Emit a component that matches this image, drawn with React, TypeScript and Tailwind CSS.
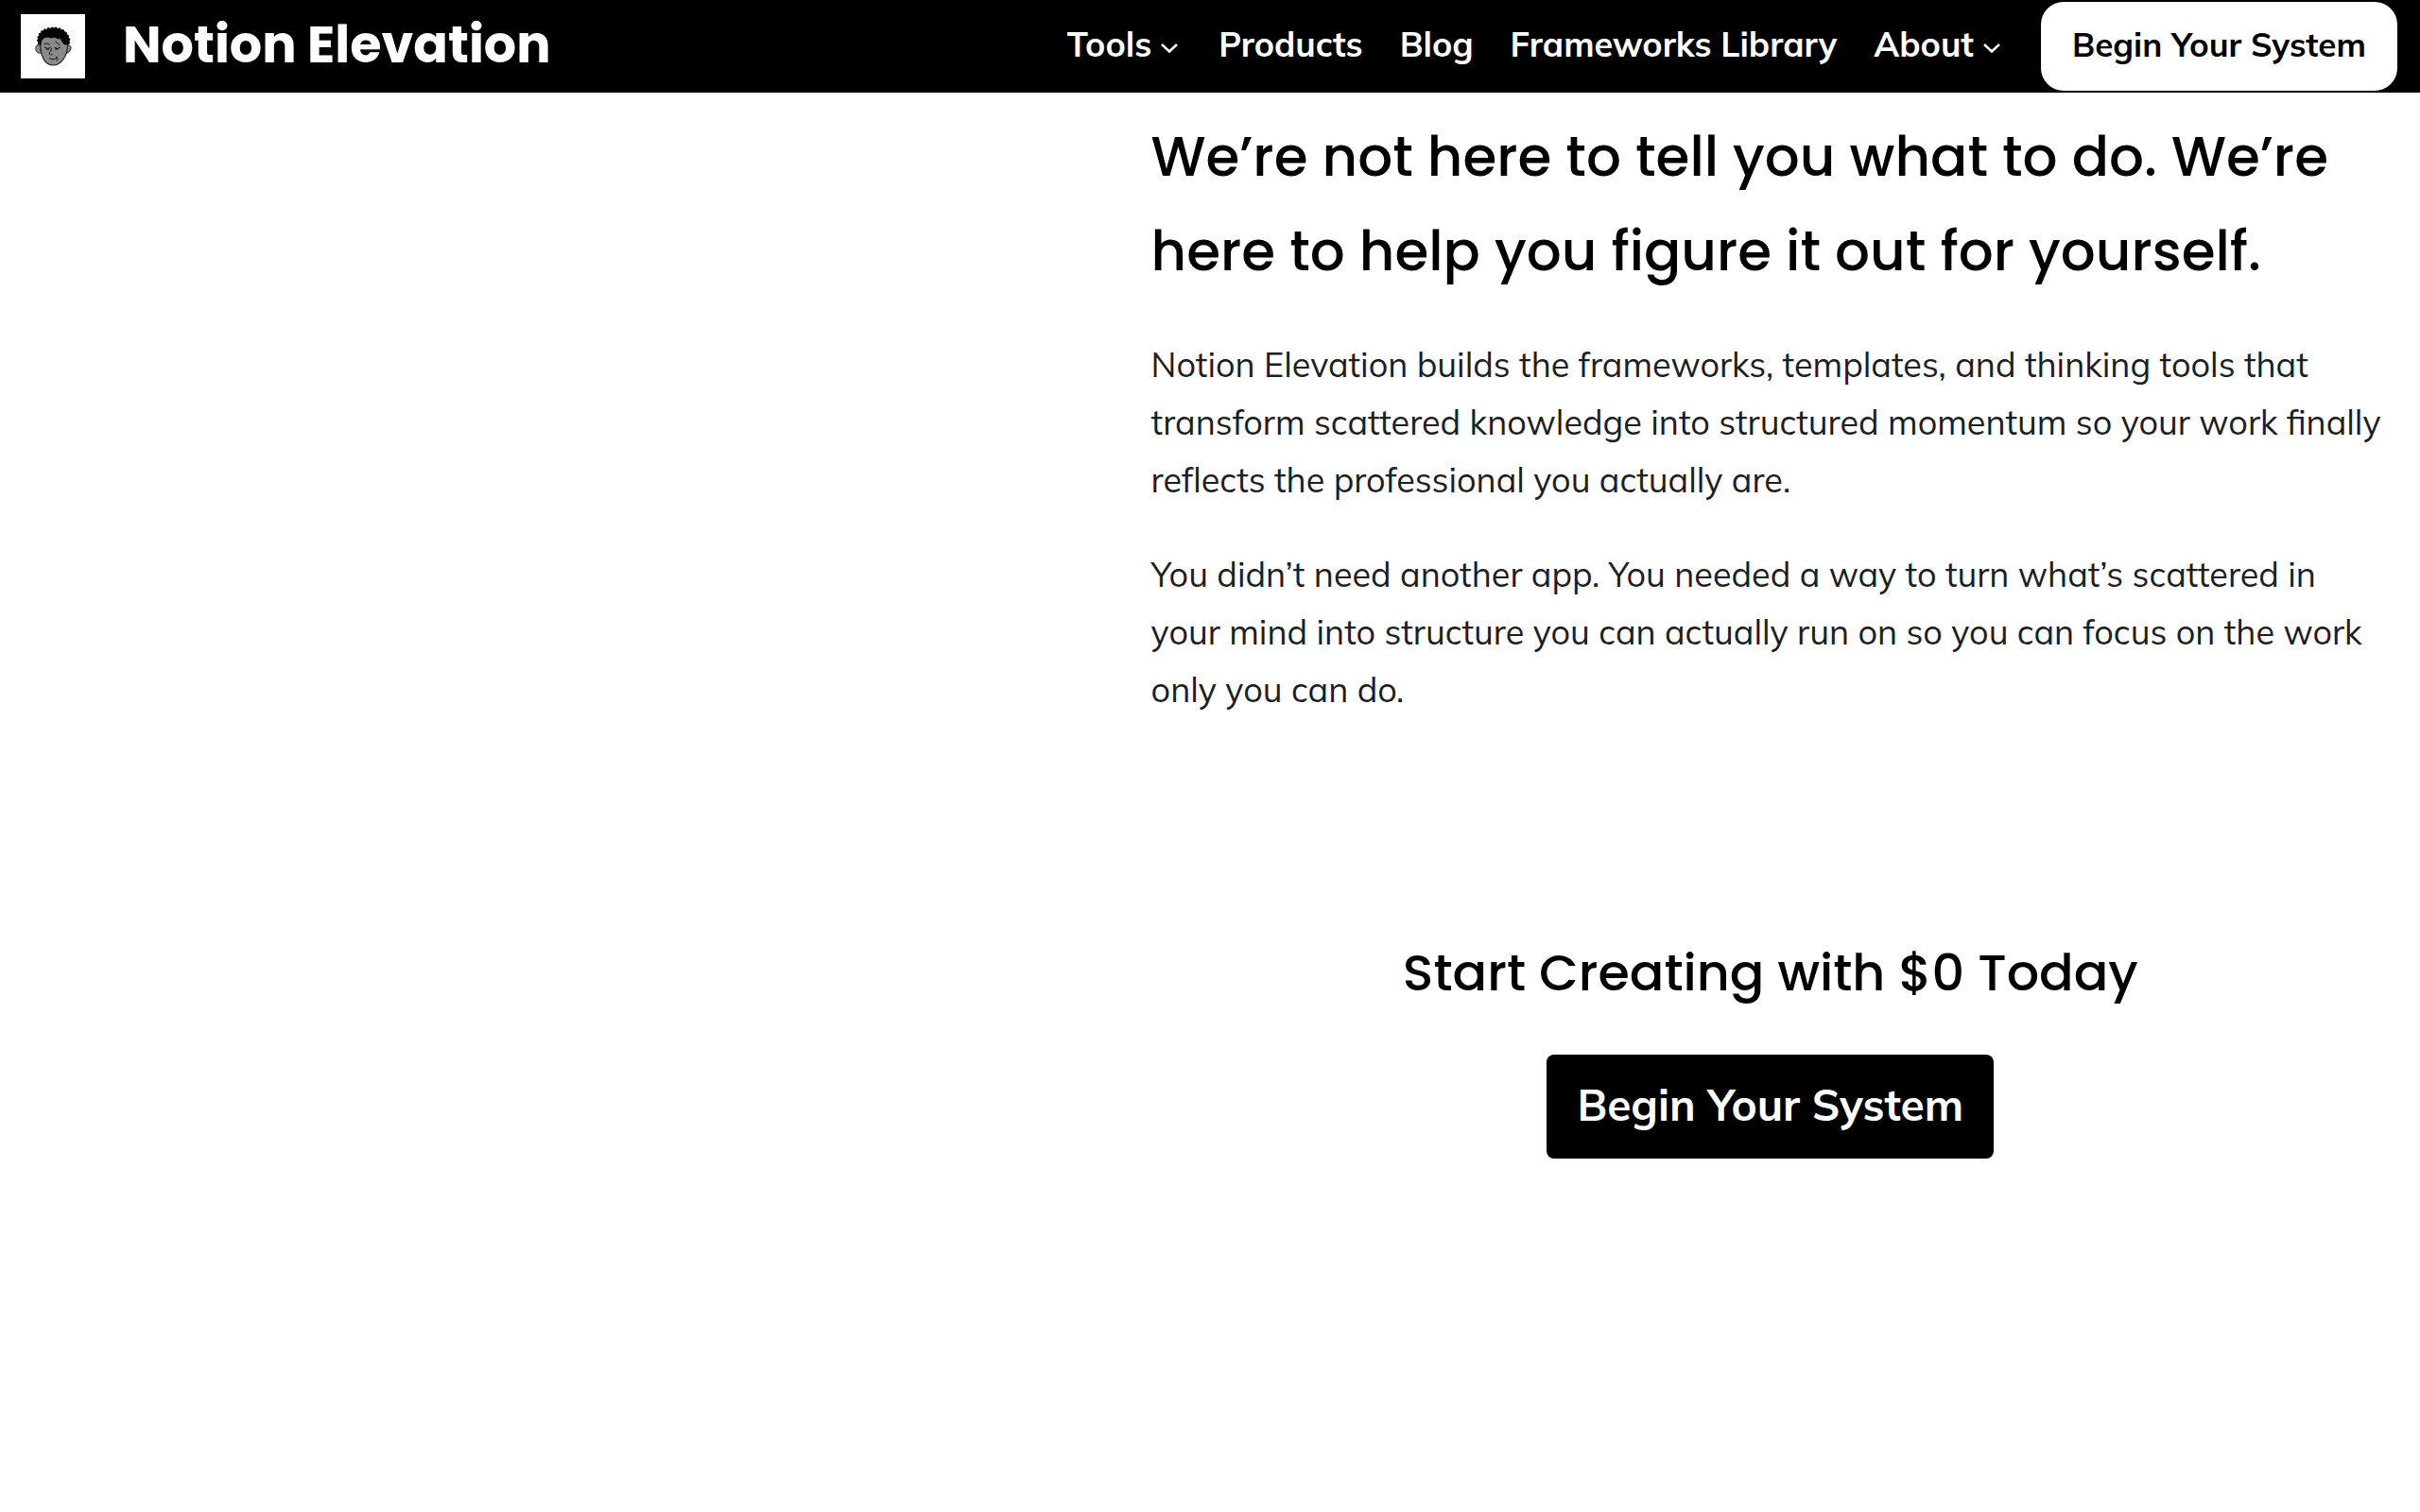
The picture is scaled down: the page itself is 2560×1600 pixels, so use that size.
import clsx from "clsx";

type NavItem = {
  label: string;
  href: string;
  hasMenu?: boolean;
};

const NAV_ITEMS: NavItem[] = [
  { label: "Tools", href: "#tools", hasMenu: true },
  { label: "Products", href: "#products" },
  { label: "Blog", href: "#blog" },
  { label: "Frameworks Library", href: "#frameworks" },
  { label: "About", href: "#about", hasMenu: true },
];

const PARAGRAPHS = [
  "Notion Elevation builds the frameworks, templates, and thinking tools that transform scattered knowledge into structured momentum so your work finally reflects the professional you actually are.",
  "You didn’t need another app. You needed a way to turn what’s scattered in your mind into structure you can actually run on so you can focus on the work only you can do.",
];

function Avatar() {
  return (
    <svg viewBox="0 0 68 68" className="h-[68px] w-[68px] shrink-0" aria-hidden="true">
      <rect width="68" height="68" fill="#fff" />
      {/* ears */}
      <g fill="#8b8b8b" stroke="#222" strokeWidth="1">
        <path d="M21 34C18 31.500 15.500 33 15.800 36.500C16 40 18.500 42 21.500 41Z" />
        <path d="M47 34C50 31.500 53.500 33 53 36C52.500 39.500 50 41.500 47 41.500Z" />
      </g>
      {/* face */}
      <path
        d="M20.800 27C20.500 33 20.800 39 22.500 44C24.500 50 29 54 34.500 54C40 54 44 50 47 44.500C49 40 50 34 49.500 27C42 19 28 19 20.800 27Z"
        fill="#8a8a8a"
        stroke="#222"
        strokeWidth="1.100"
      />
      {/* hair */}
      <path
        d="M21 32.500L18 31.500L18.800 29.500L17.200 28L18.500 26L17.800 24L19.500 22.800L19.200 20.500L21.500 20L21.700 17.800L24 17.800L25 15.700L27.300 16.500L28.800 14.300L31 15.500L33 13.700L35 15L37.200 13.700L39 15.500L41.500 14.700L42.800 16.700L45.200 16.600L46 18.700L48.300 19.200L48.600 21.500L50.700 22.600L50.300 24.700L52 26.400L51 28.500L52 30.500L50 32H46L43.500 28.500L41.500 25.500L39 26L36 24.300L32 25L28.500 24.300L24.500 25L21.500 28.500Z"
        fill="#050505"
        stroke="#050505"
        strokeWidth=".8"
        strokeLinejoin="round"
      />
      {/* brows, eyes, nose and mouth */}
      <g fill="none" stroke="#1a1a1a" strokeWidth="1" strokeLinecap="round">
        <path d="M25 31.300Q28 30.300 30.500 32M36.800 29L41 32.500" />
        <path d="M25.200 35.300Q28.500 37.500 31.500 35.500M36 35.500Q38.800 37.500 41.500 35.500" />
        <path d="M27.300 37H29.300M36.800 37H38.800" strokeWidth="1.500" />
        <path d="M32.500 36.500C32.300 39 30 40.500 30 42Q31 43.500 33 42.800" />
        <path d="M30.500 46.500Q34 49.500 38 46M38 45Q39 46.500 38.300 49" />
      </g>
    </svg>
  );
}

function Chevron() {
  return (
    <svg viewBox="0 0 18 12" className="mt-2 h-3 w-[18px]" fill="none" aria-hidden="true">
      <path d="M1 2L9 9.500L17 2" stroke="#fff" strokeWidth="2.400" />
    </svg>
  );
}

function Header() {
  return (
    <header className="flex h-[98px] items-center justify-between bg-black pr-6 pl-[22px] text-white">
      <a href="#home" className="flex items-center gap-10">
        <Avatar />
        <span className="pb-1 font-['Poppins','Inter',sans-serif] text-[54px] leading-[64px] font-bold">
          Notion Elevation
        </span>
      </a>

      <nav className="flex items-center gap-[39px] text-[36px] leading-[48px] font-bold">
        {NAV_ITEMS.map((item) => (
          <a
            key={item.label}
            href={item.href}
            className={clsx("flex items-center gap-2.5 pb-[5px]", item.hasMenu && "pr-1")}
          >
            {item.label}
            {item.hasMenu && <Chevron />}
          </a>
        ))}
        <button
          type="button"
          className="h-[94px] rounded-3xl bg-white px-[33px] pb-1 text-[35px] text-black"
        >
          Begin Your System
        </button>
      </nav>
    </header>
  );
}

export default function App() {
  return (
    <div className="min-h-screen bg-white font-['Mulish','Open_Sans',sans-serif] text-[#1d1e22]">
      <Header />
      <main className="grid grid-cols-[19fr_21fr] px-8 pt-[18px]">
        <section className="col-start-2">
          <h2 className="font-['Poppins','Inter',sans-serif] text-[58px] leading-[100px] font-medium text-black">
            We’re not here to tell you what to do. We’re here to help you figure it out for yourself.
          </h2>
          <div className="mt-[39px] flex flex-col gap-[39px] text-[36px] leading-[61px]">
            {PARAGRAPHS.map((text) => (
              <p key={text}>{text}</p>
            ))}
          </div>

          <div className="mt-56 flex flex-col items-center">
            <h3 className="font-['Poppins','Inter',sans-serif] text-[54px] leading-[90px] font-medium text-black">
              Start Creating with $0 Today
            </h3>
            <button
              type="button"
              className="mt-[42px] h-[110px] rounded-lg bg-black px-8 pb-1 text-[46px] leading-[64px] font-bold text-white"
            >
              Begin Your System
            </button>
          </div>
        </section>
      </main>
    </div>
  );
}
